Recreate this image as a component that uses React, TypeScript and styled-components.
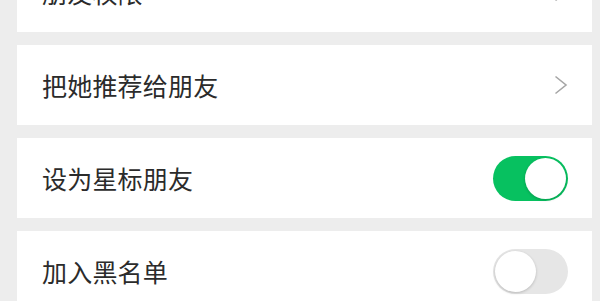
import styled, { createGlobalStyle } from "styled-components";

const GlobalStyle = createGlobalStyle`
  html, body {
    margin: 0;
    padding: 0;
    background: #ededed;
    overflow: hidden;
  }
  body {
    font-family: "Noto Sans CJK SC", "Noto Sans", sans-serif;
  }
`;

const List = styled.div`
  display: flex;
  flex-direction: column;
  gap: 13px;
  margin-top: -48px;
  padding: 0 8px 0 17px;
`;

const Card = styled.div`
  height: 80px;
  background: #fff;
  display: flex;
  align-items: center;
  justify-content: space-between;
  padding: 0 24px 0 25px;
  box-sizing: border-box;
`;

const Label = styled.span`
  font-size: 25px;
  color: #2b2b2b;
  letter-spacing: 0.2px;
`;

const Chevron = styled.svg`
  width: 14px;
  height: 20px;
`;

const Track = styled.div<{ $on: boolean }>`
  width: 75px;
  height: 45px;
  border-radius: 23px;
  background: ${(p) => (p.$on ? "#07c160" : "#e6e6e6")};
  display: flex;
  align-items: center;
  justify-content: ${(p) => (p.$on ? "flex-end" : "flex-start")};
  padding: 2px;
  box-sizing: border-box;
`;

const Knob = styled.div`
  width: 41px;
  height: 41px;
  border-radius: 50%;
  background: #fff;
  box-shadow: 0 1px 3px rgba(0, 0, 0, 0.2);
`;

const Arrow = () => (
  <Chevron viewBox="0 0 14 20">
    <path d="M1.5 1.5 L12 10 L1.5 18.5" fill="none" stroke="#a6a6a6" strokeWidth="1.6" />
  </Chevron>
);

type Row = { label: string; kind: "link" | "switch"; on?: boolean };

const rows: Row[] = [
  { label: "朋友权限", kind: "link" },
  { label: "把她推荐给朋友", kind: "link" },
  { label: "设为星标朋友", kind: "switch", on: true },
  { label: "加入黑名单", kind: "switch", on: false },
];

export default function App() {
  return (
    <>
      <GlobalStyle />
      <List>
        {rows.map((r) => (
          <Card key={r.label}>
            <Label>{r.label}</Label>
            {r.kind === "link" ? (
              <Arrow />
            ) : (
              <Track $on={!!r.on}>
                <Knob />
              </Track>
            )}
          </Card>
        ))}
      </List>
    </>
  );
}
